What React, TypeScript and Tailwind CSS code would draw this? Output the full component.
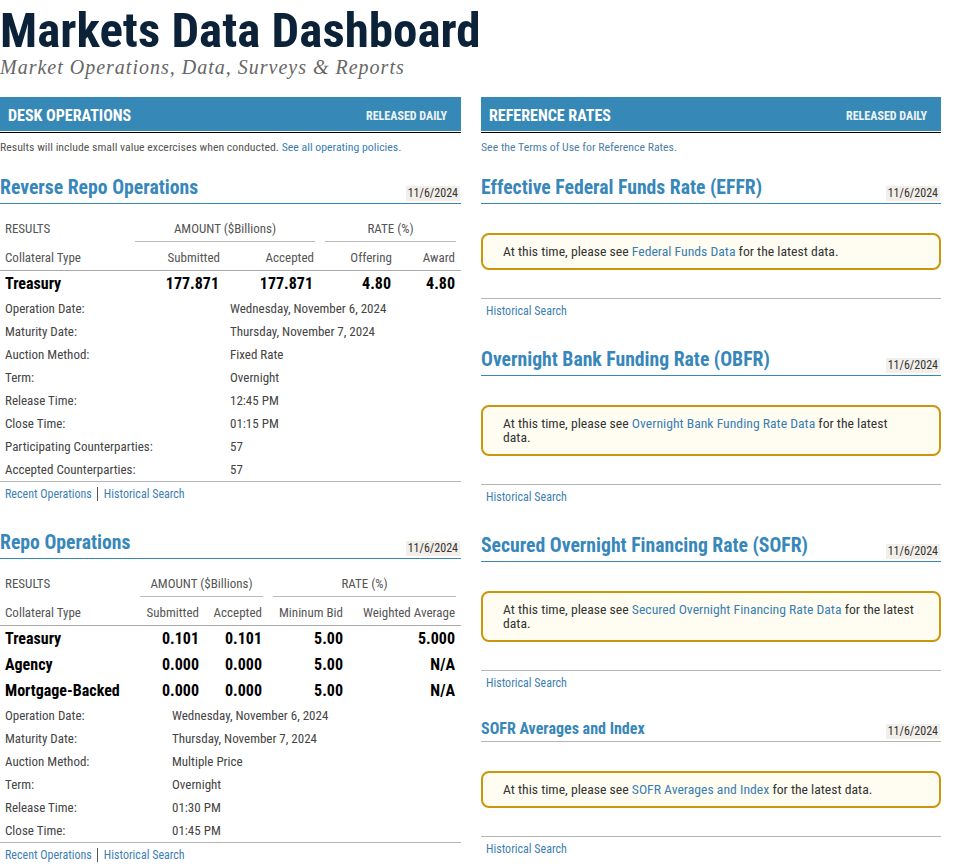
import React from "react";

const BLUE = "text-[#3787ba]";

function SectionHead({ title, small, grayLine }: { title: string; small?: boolean; grayLine?: boolean }) {
  return (
    <div
      className={`flex items-end justify-between border-b pb-[2px] ${
        grayLine ? "border-[#b5b5b5]" : "border-[#3787ba]"
      }`}
    >
      <h2
        className={`font-bold ${BLUE} ${
          small ? "text-[16px] leading-[20px]" : "text-[19.7px] leading-[26px]"
        }`}
      >
        {title}
      </h2>
      <span className="mr-px bg-[#f2efea] px-[2px] text-[12px] leading-[15px] text-[#333]">11/6/2024</span>
    </div>
  );
}

function Bar({ title }: { title: string }) {
  return (
    <div>
      <div className="flex h-[34px] items-center justify-between bg-[#3688b6] pl-[8px] pr-[14px] pt-[4px]">
        <span className="text-[16px] font-bold text-white">{title}</span>
        <span className="text-[12px] font-bold text-[#eef3f7]">RELEASED DAILY</span>
      </div>
      <div className="mt-px h-px bg-black" />
    </div>
  );
}

function LinkRow({ recent }: { recent?: boolean }) {
  return (
    <div className="border-t border-[#b5b5b5] pl-[5px] pt-[4px] text-[12px] leading-[16px] text-[#3d7fb4]">
      {recent && <span className="mr-[6px] border-r border-[#555] pr-[5px]">Recent Operations</span>}
      <span>Historical Search</span>
    </div>
  );
}

function Details({ rows, col }: { rows: [string, string][]; col: string }) {
  return (
    <div>
      {rows.map(([k, v]) => (
        <div key={k} className={`grid ${col} text-[13px] leading-[23px] text-[#444]`}>
          <span className="pl-[5px]">{k}</span>
          <span>{v}</span>
        </div>
      ))}
    </div>
  );
}

function ReverseRepo() {
  const cols = "grid-cols-[135px_85px_95px_10px_67px_1fr]";
  return (
    <div>
      <SectionHead title="Reverse Repo Operations" />
      <div className="mt-[14px] text-[13px] text-[#555]">
        <div className={`grid ${cols} leading-[16px]`}>
          <span className="pl-[5px] pt-[3px]">RESULTS</span>
          <span className="col-span-2 border-b border-[#bbb] pb-[4px] pt-[3px] text-center">AMOUNT ($Billions)</span>
          <span />
          <span className="col-span-2 mr-[5px] border-b border-[#bbb] pb-[4px] pt-[3px] text-center">RATE (%)</span>
        </div>
        <div className={`grid ${cols} border-b border-[#aaa] pb-[4px] pt-[8px] leading-[16px]`}>
          <span className="pl-[5px]">Collateral Type</span>
          <span className="text-right">Submitted</span>
          <span className="pr-px text-right">Accepted</span>
          <span />
          <span className="text-right">Offering</span>
          <span className="pr-[6px] text-right">Award</span>
        </div>
        <div className={`grid ${cols} text-[16px] font-bold leading-[26px] text-black`}>
          <span className="pl-[5px]">Treasury</span>
          <span className="pr-px text-right">177.871</span>
          <span className="pr-[2px] text-right">177.871</span>
          <span />
          <span className="pr-px text-right">4.80</span>
          <span className="pr-[6px] text-right">4.80</span>
        </div>
      </div>
      <Details
        col="grid-cols-[230px_1fr]"
        rows={[
          ["Operation Date:", "Wednesday, November 6, 2024"],
          ["Maturity Date:", "Thursday, November 7, 2024"],
          ["Auction Method:", "Fixed Rate"],
          ["Term:", "Overnight"],
          ["Release Time:", "12:45 PM"],
          ["Close Time:", "01:15 PM"],
          ["Participating Counterparties:", "57"],
          ["Accepted Counterparties:", "57"],
        ]}
      />
      <LinkRow recent />
    </div>
  );
}

function Repo() {
  const cols = "grid-cols-[140px_60px_63px_10px_71px_1fr]";
  const data: [string, string, string, string, string][] = [
    ["Treasury", "0.101", "0.101", "5.00", "5.000"],
    ["Agency", "0.000", "0.000", "5.00", "N/A"],
    ["Mortgage-Backed", "0.000", "0.000", "5.00", "N/A"],
  ];
  return (
    <div className="mt-[28px]">
      <SectionHead title="Repo Operations" />
      <div className="mt-[14px] text-[13px] text-[#555]">
        <div className={`grid ${cols} leading-[16px]`}>
          <span className="pl-[5px] pt-[3px]">RESULTS</span>
          <span className="col-span-2 border-b border-[#bbb] pb-[4px] pt-[3px] text-center">AMOUNT ($Billions)</span>
          <span />
          <span className="col-span-2 mr-[5px] border-b border-[#bbb] pb-[4px] pt-[3px] text-center">RATE (%)</span>
        </div>
        <div className={`grid ${cols} border-b border-[#aaa] pb-[4px] pt-[8px] leading-[16px]`}>
          <span className="pl-[5px]">Collateral Type</span>
          <span className="pr-px text-right">Submitted</span>
          <span className="pr-px text-right">Accepted</span>
          <span />
          <span className="pr-px text-right">Mininum Bid</span>
          <span className="pr-[6px] text-right">Weighted Average</span>
        </div>
        {data.map((r) => (
          <div key={r[0]} className={`grid ${cols} text-[16px] font-bold leading-[26px] text-black`}>
            <span className="pl-[5px]">{r[0]}</span>
            <span className="pr-px text-right">{r[1]}</span>
            <span className="pr-px text-right">{r[2]}</span>
            <span />
            <span className="pr-px text-right">{r[3]}</span>
            <span className="pr-[6px] text-right">{r[4]}</span>
          </div>
        ))}
      </div>
      <Details
        col="grid-cols-[172px_1fr]"
        rows={[
          ["Operation Date:", "Wednesday, November 6, 2024"],
          ["Maturity Date:", "Thursday, November 7, 2024"],
          ["Auction Method:", "Multiple Price"],
          ["Term:", "Overnight"],
          ["Release Time:", "01:30 PM"],
          ["Close Time:", "01:45 PM"],
        ]}
      />
      <LinkRow recent />
    </div>
  );
}

function RateBlock({
  title,
  link,
  small,
  grayLine,
  first,
  wrap,
}: {
  title: string;
  link: string;
  small?: boolean;
  grayLine?: boolean;
  first?: boolean;
  wrap?: boolean;
}) {
  return (
    <div className={first ? "mt-[20px]" : "mt-[28px]"}>
      <SectionHead title={title} small={small} grayLine={grayLine} />
      <div className="mt-[29px] rounded-[8px] border-2 border-[#c9960c] bg-[#fffdf1] pb-[10px] pl-[20px] pr-[8px] pt-[9px] text-[13.7px] leading-[14px] text-[#333]">
        At this time, please see <span className="text-[#3a7db3]">{link}</span> for the latest
        {wrap ? <br /> : " "}
        data.
      </div>
      <div className="mt-[28px]">
        <LinkRow />
      </div>
    </div>
  );
}

export default function App() {
  return (
    <div className="w-[941px] bg-white pb-[20px] text-[#444] [font-family:'Roboto_Condensed',Roboto,sans-serif] font-stretch-condensed">
      <div className="pt-[4px]">
        <h1 className="text-[49px] font-bold leading-[54px] text-[#0b2238]">Markets Data Dashboard</h1>
        <p className="text-[20px] italic leading-[18px] tracking-[1px] text-[#666] [font-family:'Liberation_Serif',serif] font-stretch-normal">
          Market Operations, Data, Surveys &amp; Reports
        </p>
      </div>
      <div className="mt-[21px] grid grid-cols-[461px_460px] gap-x-[20px]">
        <div>
          <Bar title="DESK OPERATIONS" />
          <p className="mt-[6px] text-[11.8px] leading-[16px] text-[#555]">
            Results will include small value excercises when conducted.{" "}
            <span className="text-[#3a7db3]">See all operating policies.</span>
          </p>
          <div className="mt-[20px]">
            <ReverseRepo />
          </div>
          <Repo />
        </div>
        <div>
          <Bar title="REFERENCE RATES" />
          <p className="mt-[6px] text-[11.8px] leading-[16px] text-[#4d7fa8]">See the Terms of Use for Reference Rates.</p>
          <RateBlock first title="Effective Federal Funds Rate (EFFR)" link="Federal Funds Data" />
          <RateBlock wrap title="Overnight Bank Funding Rate (OBFR)" link="Overnight Bank Funding Rate Data" />
          <RateBlock wrap title="Secured Overnight Financing Rate (SOFR)" link="Secured Overnight Financing Rate Data" />
          <RateBlock small grayLine title="SOFR Averages and Index" link="SOFR Averages and Index" />
        </div>
      </div>
    </div>
  );
}
